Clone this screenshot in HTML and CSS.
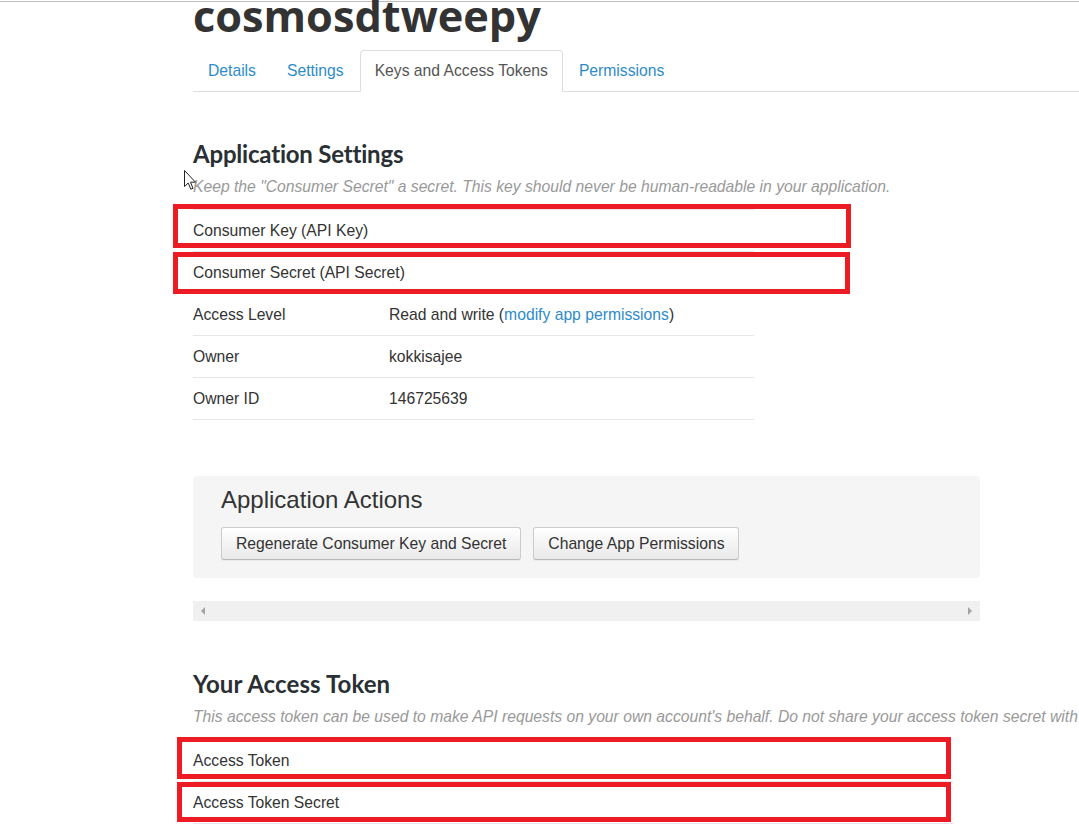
FILE: index.html
```html
<!DOCTYPE html>
<html>
<head>
<meta charset="utf-8">
<title>cosmosdtweepy</title>
<link rel="stylesheet" href="styles.css">
</head>
<body>
<div class="page">
  <div class="topline"></div>
  <div class="content">
    <h1 class="app-title">cosmosdtweepy</h1>
    <ul class="tabs">
      <li><a href="#">Details</a></li>
      <li><a href="#">Settings</a></li>
      <li class="active"><a href="#">Keys and Access Tokens</a></li>
      <li><a href="#">Permissions</a></li>
    </ul>

    <section class="block first">
      <h2 class="section-title">Application Settings</h2>
      <p class="note">Keep the "Consumer Secret" a secret. This key should never be human-readable in your application.</p>
      <table class="info">
        <tr><td class="label">Consumer Key (API Key)</td><td></td></tr>
        <tr><td class="label">Consumer Secret (API Secret)</td><td></td></tr>
        <tr><td class="label">Access Level</td><td>Read and write (<a href="#">modify app permissions</a>)</td></tr>
        <tr><td class="label">Owner</td><td>kokkisajee</td></tr>
        <tr><td class="label">Owner ID</td><td>146725639</td></tr>
      </table>
    </section>

    <div class="actions">
      <h3 class="actions-title">Application Actions</h3>
      <div class="btns">
        <button class="btn">Regenerate Consumer Key and Secret</button>
        <button class="btn">Change App Permissions</button>
      </div>
    </div>

    <div class="hscroll">
      <span class="arrow arrow-left"></span>
      <span class="arrow arrow-right"></span>
    </div>

    <section class="block second">
      <h2 class="section-title">Your Access Token</h2>
      <p class="note">This access token can be used to make API requests on your own account's behalf. Do not share your access token secret with anyone.</p>
      <table class="info token">
        <tr><td class="label">Access Token</td><td></td></tr>
        <tr><td class="label">Access Token Secret</td><td></td></tr>
      </table>
    </section>
  </div>

  <div class="mark m1"></div>
  <div class="mark m2"></div>
  <div class="mark m3"></div>
  <div class="mark m4"></div>

  <svg class="cursor" width="13" height="21" viewBox="0 0 13 21">
    <path d="M0.5 0.5 L0.5 16.5 L4.2 13 L6.8 19.2 L9 18.3 L6.5 12.2 L11.5 12.2 Z" fill="#fff" stroke="#222" stroke-width="1" stroke-linejoin="miter"/>
  </svg>
</div>
</body>
</html>
```

FILE: styles.css
```css
html, body {
  margin: 0;
  padding: 0;
  background: #fff;
}

body {
  overflow: hidden;
  font-family: "Liberation Sans", Arial, sans-serif;
  font-size: 15.7px;
  color: #333;
}

.page {
  position: relative;
  width: 1079px;
  height: 828px;
  overflow: hidden;
}

.topline {
  margin-top: 1px;
  height: 1px;
  background: #bdbdbd;
}

.content {
  padding-left: 193px;
}

.app-title {
  margin: -8px 0 0 0;
  font-family: "Open Sans", sans-serif;
  font-weight: 700;
  font-size: 43.3px;
  line-height: 44px;
  color: #333;
}

.tabs {
  list-style: none;
  margin: 12px 0 0 0;
  padding: 0;
  display: flex;
  border-bottom: 1px solid #ddd;
}

.tabs li {
  margin-right: 1px;
  margin-bottom: -1px;
}

.tabs a {
  display: block;
  padding: 10px 14px;
  line-height: 20px;
  border: 1px solid transparent;
  border-radius: 4px 4px 0 0;
  color: #2e8bc9;
  text-decoration: none;
}

.tabs .active a {
  color: #555;
  background: #fff;
  border-color: #ddd;
  border-bottom-color: transparent;
}

.block.first {
  margin-top: 47px;
}

.section-title {
  margin: 0;
  font-family: Lato, sans-serif;
  font-weight: 700;
  font-size: 24px;
  letter-spacing: -0.2px;
  line-height: 30px;
  color: #292f33;
}

.block.second .section-title {
  letter-spacing: 0.1px;
}

.note {
  margin: 8px 0 12px 0;
  font-style: italic;
  font-size: 15.7px;
  line-height: 20px;
  color: #999;
  white-space: nowrap;
}

.info {
  border-collapse: collapse;
  table-layout: fixed;
  width: 561px;
}

.info td {
  padding: 10px 0;
  line-height: 21px;
  border-top: 1px solid #e6e6e6;
  vertical-align: top;
  white-space: nowrap;
}

.info tr:last-child td {
  border-bottom: 1px solid #e6e6e6;
}

.info td.label {
  width: 196px;
  overflow: visible;
}

.info a {
  color: #2e8bc9;
  text-decoration: none;
}

.actions {
  margin-top: 56px;
  width: 759px;
  padding: 10px 0 18px 28px;
  background: #f5f5f5;
  border-radius: 4px;
}

.actions-title {
  margin: 0 0 13px 0;
  font-weight: 400;
  font-size: 24px;
  line-height: 28px;
  color: #333;
}

.btns {
  display: flex;
  gap: 12px;
}

.btn {
  height: 33px;
  padding: 0 14px;
  font-family: "Liberation Sans", Arial, sans-serif;
  font-size: 15.7px;
  color: #333;
  background: linear-gradient(#ffffff, #e9e9e9);
  border: 1px solid #ccc;
  border-bottom-color: #b8b8b8;
  border-radius: 3px;
  box-shadow: 0 1px 1px rgba(0,0,0,0.05);
}

.hscroll {
  margin-top: 23px;
  width: 787px;
  height: 20px;
  background: #f0f0f0;
  display: flex;
  justify-content: space-between;
  align-items: center;
  padding: 0 8px;
  box-sizing: border-box;
}

.arrow {
  width: 0;
  height: 0;
  border-top: 4px solid transparent;
  border-bottom: 4px solid transparent;
}

.arrow-left {
  border-right: 4px solid #a3a3a3;
}

.arrow-right {
  border-left: 4px solid #a3a3a3;
}

.block.second {
  margin-top: 48px;
}

.info.token {
  width: 760px;
}

.mark {
  position: absolute;
  border: 5px solid #ed1c24;
  box-sizing: border-box;
}

.m1 { left: 173px; top: 204px; width: 678px; height: 44px; }
.m2 { left: 173px; top: 252px; width: 677px; height: 42px; }
.m3 { left: 177px; top: 737px; width: 774px; height: 42px; }
.m4 { left: 177px; top: 782px; width: 774px; height: 40px; }

.cursor {
  position: absolute;
  left: 184px;
  top: 170px;
}
```
